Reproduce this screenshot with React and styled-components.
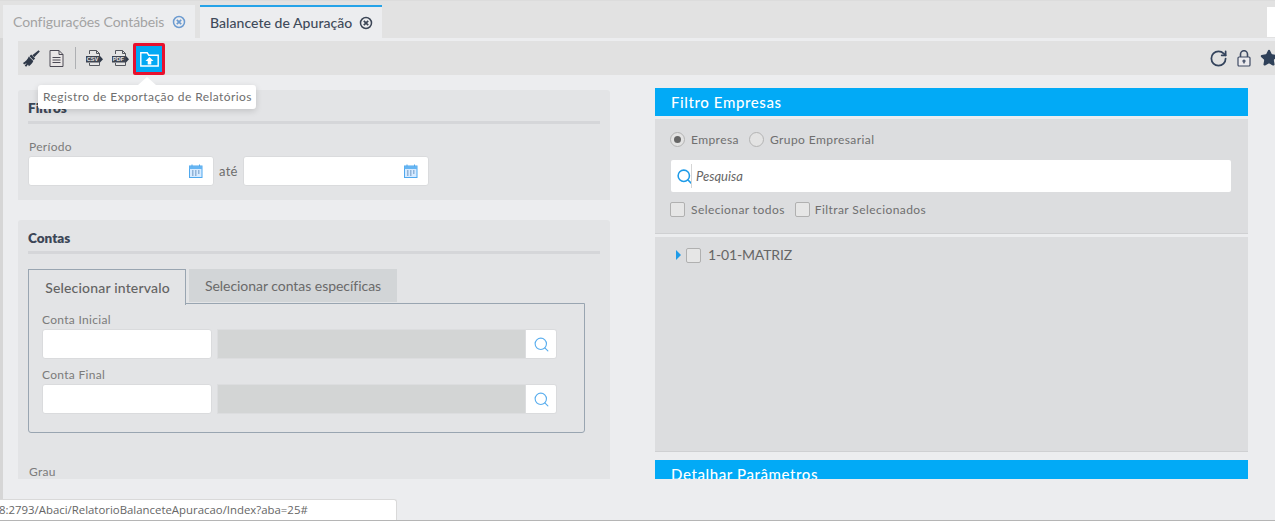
import React from "react";
import styled, { createGlobalStyle } from "styled-components";
import { RotateCw, Search, Star } from "lucide-react";

const Global = createGlobalStyle`
  html, body { margin: 0; padding: 0; background: #fff; }
  * { box-sizing: border-box; }
  body { font-family: Lato, "Open Sans", sans-serif; color: #666; }
`;

const Page = styled.div`
  position: relative;
  width: 1275px;
  height: 525px;
  overflow: hidden;
  background: #fff;
`;
const Screen = styled.div`
  height: 521px;
  background: #ecedef;
  border-bottom: 1px solid #b5b5b5;
`;
const TabBar = styled.div`
  height: 38px;
  background: #e2e2e2;
  border-top: 1px solid #dcdcdc;
  padding: 4px 0 0 3px;
  display: flex;
  align-items: stretch;
  gap: 5px;
  position: relative;
`;
const Tab = styled.div`
  display: flex;
  align-items: center;
  width: ${(p) => p.$w}px;
  padding-left: 10px;
  gap: ${(p) => (p.$active ? 7 : 8)}px;
  font-size: 14px;
  letter-spacing: ${(p) => (p.$active ? "0.05px" : "-0.08px")};
  white-space: nowrap;
  background: #ecedef;
  color: ${(p) => (p.$active ? "#3f4a5a" : "#a3a3a3")};
  border-top: ${(p) => (p.$active ? "2px solid #26a3e8" : "0")};
  font-weight: ${(p) => (p.$active ? 500 : 400)};
`;
const CornerBox = styled.div`
  position: absolute;
  right: 0;
  top: 6px;
  width: 8px;
  height: 30px;
  background: #fff;
`;
const Body = styled.div`
  padding: 3px 0 0 18px;
  background: linear-gradient(to right, #d6d6d6 3px, #ecedef 3px);
  height: 482px;
`;
const Toolbar = styled.div`
  height: 34px;
  background: #e1e1e1;
  display: flex;
  align-items: center;
  padding-left: 4px;
  position: relative;
`;
const ToolIcon = styled.span`
  display: flex;
  width: ${(p) => p.$w || 26}px;
  justify-content: center;
  align-items: center;
`;
const Divider = styled.span`
  width: 1px;
  height: 22px;
  background: #aeb0b3;
  margin: 0 5px 0 3px;
`;
const ActiveTool = styled.span`
  width: 32px;
  height: 32px;
  align-self: flex-end;
  border: 3px solid #e8112d;
  background: #02a9f4;
  display: flex;
  align-items: center;
  justify-content: center;
  border-radius: 2px;
`;
const RightTools = styled.div`
  margin-left: auto;
  display: flex;
  align-items: center;
  gap: 9px;
  width: 66px;
  overflow: hidden;
  & > svg { flex: none; }
`;
const Tooltip = styled.div`
  position: absolute;
  left: 20px;
  top: 44px;
  height: 24px;
  width: 218px;
  background: #fff;
  border-radius: 3px;
  font-size: 12px;
  letter-spacing: 0.43px;
  line-height: 24px;
  padding-left: 5px;
  color: #6e6e6e;
  box-shadow: 0 2px 6px rgba(0, 0, 0, 0.15);
  white-space: nowrap;
  &::before {
    content: "";
    position: absolute;
    left: 100px;
    top: -8px;
    border-left: 9px solid transparent;
    border-right: 9px solid transparent;
    border-bottom: 8px solid #fff;
  }
`;
const Columns = styled.div`
  display: flex;
  align-items: flex-start;
  height: 404px;
  overflow: hidden;
`;
const LeftCol = styled.div`
  width: 592px;
  margin-top: 15px;
  display: flex;
  flex-direction: column;
  gap: 20px;
`;
const Card = styled.section`
  background: #e3e4e6;
  border-radius: 3px 3px 0 0;
  padding: 10px 10px 0;
  height: ${(p) => p.$h}px;
`;
const CardTitle = styled.h3`
  margin: 0;
  height: 24px;
  font-size: 13.5px;
  line-height: 17px;
  font-weight: 800;
  color: #3c4656;
  border-bottom: 3px solid #d5d6d9;
`;
const FieldLabel = styled.label`
  display: block;
  font-size: 12px;
  letter-spacing: 0.3px;
  color: #7b7b7b;
  line-height: 14px;
  padding-left: ${(p) => p.$pl || 0}px;
  margin-top: ${(p) => p.$mt || 0}px;
`;
const DateRow = styled.div`
  display: flex;
  align-items: center;
  margin-top: 2px;
  gap: 5px;
  font-size: 13px;
  color: #6d6d6d;
  letter-spacing: 0.3px;
`;
const DateInput = styled.div`
  width: 186px;
  height: 30px;
  background: #fff;
  border: 1px solid #dadbdd;
  border-radius: 3px;
  display: flex;
  align-items: center;
  justify-content: flex-end;
  padding-right: 10px;
`;
const TabsRow = styled.div`
  display: flex;
  align-items: flex-start;
  gap: 3px;
  margin-top: 15px;
  position: relative;
  z-index: 1;
`;
const TabActive = styled.div`
  width: 158px;
  height: 36px;
  background: #e3e4e6;
  border: 1px solid #99a5b1;
  border-bottom: 0;
  padding-left: 1px;
  font-size: 14px;
  font-weight: 500;
  letter-spacing: 0.18px;
  color: #636363;
  text-align: center;
  line-height: 36px;
`;
const TabIdle = styled.div`
  width: 208px;
  height: 33px;
  background: #d2d5d7;
  font-size: 14px;
  letter-spacing: -0.04px;
  color: #6a6a6a;
  text-align: center;
  line-height: 34px;
`;
const TabPanel = styled.div`
  margin-top: -2px;
  width: 557px;
  height: 130px;
  border: 1px solid #99a5b1;
  border-radius: 0 0 3px 3px;
  padding: 9px 13px 0;
`;
const AccountRow = styled.div`
  display: flex;
  margin-top: 2px;
`;
const TextInput = styled.div`
  width: 170px;
  height: 30px;
  background: #fff;
  border: 1px solid #dadbdd;
  border-radius: 3px;
`;
const ReadOnly = styled.div`
  width: 309px;
  height: 30px;
  margin-left: 5px;
  background: #d3d5d5;
  border: 1px solid #dcdddf;
`;
const LookupBtn = styled.div`
  width: 31px;
  height: 30px;
  background: #fff;
  border: 1px solid #dadbdd;
  border-left: 0;
  border-radius: 0 3px 3px 0;
  display: flex;
  align-items: center;
  justify-content: center;
`;
const RightCol = styled.div`
  width: 593px;
  margin-left: 45px;
  margin-top: 13px;
`;
const PanelHead = styled.div`
  height: 28px;
  background: #02aaf6;
  color: #fff;
  font-size: 15px;
  font-weight: 500;
  letter-spacing: 0.6px;
  line-height: 29px;
  padding-left: 16px;
`;
const FilterBox = styled.div`
  margin-top: 3px;
  height: 115px;
  background: #dcdddf;
  border-bottom: 1px solid #cfd0d2;
  padding: 12px 15px 0;
`;
const OptionRow = styled.div`
  display: flex;
  align-items: center;
  font-size: 12px;
  letter-spacing: 0.42px;
  color: #6f6f6f;
  height: 16px;
`;
const Radio = styled.span`
  width: 15px;
  height: 15px;
  border-radius: 50%;
  border: 1px solid #b3b3b3;
  background: #e3e3e3;
  display: inline-flex;
  align-items: center;
  justify-content: center;
  margin-right: 6px;
  &::after {
    content: "";
    width: 7px;
    height: 7px;
    border-radius: 50%;
    background: ${(p) => (p.$on ? "#666" : "transparent")};
  }
`;
const OptionText = styled.span`
  margin-right: ${(p) => p.$mr || 0}px;
  margin-left: ${(p) => p.$ml || 0}px;
  margin-bottom: ${(p) => p.$mb || 0}px;
`;
const SearchBox = styled.div`
  margin: 13px 0 9px 1px;
  height: 32px;
  width: 560px;
  background: #fff;
  border-radius: 2px;
  display: flex;
  align-items: center;
  padding-left: 6px;
`;
const SearchGlass = styled(Search)`
  flex: none;
  margin: 0 -2px 0 -1px;
`;
const SearchSep = styled.span`
  width: 1px;
  height: 24px;
  background: #d5d5d5;
  margin-right: 4px;
`;
const SearchHint = styled.span`
  font-style: italic;
  font-size: 13px;
  color: #666;
`;
const Check = styled.span`
  width: 15px;
  height: 15px;
  border-radius: 2px;
  border: 1px solid #b0b0b0;
  background: #e6e6e6;
  display: inline-block;
  margin-right: ${(p) => p.$mr || 6}px;
`;
const TreeBox = styled.div`
  margin-top: 3px;
  height: 215px;
  background: #dcdddf;
  border-bottom: 1px solid #cfd0d2;
  padding: 10px 0 0 21px;
  display: flex;
  align-items: flex-start;
`;
const TreeRow = styled.div`
  display: flex;
  align-items: center;
  height: 16px;
  font-size: 14px;
  letter-spacing: -0.15px;
  color: #666;
`;
const Caret = styled.span`
  width: 0;
  height: 0;
  border-left: 5px solid #1e9be8;
  border-top: 5px solid transparent;
  border-bottom: 5px solid transparent;
  margin-right: 5px;
`;
const SecondHead = styled(PanelHead)`
  margin-top: 8px;
`;
const StatusUrl = styled.div`
  position: absolute;
  left: 0;
  top: 499px;
  width: 397px;
  height: 21px;
  background: #fff;
  border: 1px solid #d9d9d9;
  border-left: 0;
  border-bottom: 0;
  border-radius: 0 3px 0 0;
  line-height: 20px;
  color: #666;
  white-space: nowrap;
  overflow: hidden;
`;
const UrlText = styled.span`
  display: block;
  font-family: "Open Sans", sans-serif;
  font-size: 11.4px;
  margin-left: -1px;
`;

const Close = ({ color }) => (
  <svg width="14" height="14" viewBox="0 0 14 14" fill="none">
    <circle cx="7" cy="7" r="5.5" stroke={color} strokeWidth="1.5" />
    <path d="M4.8 4.8l4.4 4.4M9.2 4.8l-4.4 4.4" stroke={color} strokeWidth="1.7" />
  </svg>
);
const Cal = () => (
  <svg width="14" height="14" viewBox="0 0 14 14">
    <rect x="0.5" y="2" width="12.5" height="11.5" fill="#d6eaff" stroke="#4fa8ee" />
    <rect x="0.5" y="2" width="12.5" height="3" fill="#66b5f2" />
    <path d="M3 0.5v2M10.5 0.5v2" stroke="#4fa8ee" />
    <path d="M3 7h1.5M6 7h1.5M9 7h1.5M3 9h1.5M6 9h1.5M9 9h1.5M3 11h1.5M6 11h1.5" stroke="#4f7eb0" />
  </svg>
);
const FileExport = ({ label }) => (
  <svg width="17" height="16" viewBox="0 0 17 16" fill="none">
    <path d="M3.5 4V.5h7l3 3V15.5h-10V13" stroke="#55585f" fill="#e6e6e6" />
    <path d="M10.5 .5v3h3" stroke="#55585f" />
    <rect x="0" y="6" width="14" height="6.5" fill="#3f4551" />
    <path d="M14 6l3 3.2-3 3.2z" fill="#2f3949" />
    <text x="0.8" y="11.3" fontSize="5.6" fontWeight="700" fill="#e8e8e8" fontFamily="Liberation Sans">{label}</text>
  </svg>
);
const DocIcon = () => (
  <svg width="15" height="17" viewBox="0 0 15 17" fill="none" stroke="#4c4a55">
    <path d="M1 .5h9l4 4v12H1z" fill="#e9e6e6" />
    <path d="M10 .5v4h4M3.5 7.5h8M3.5 10h8M3.5 12.5h8" />
  </svg>
);
const BroomIcon = () => (
  <svg width="17" height="17" viewBox="0 0 17 17" fill="#2f3949">
    <path d="M16.8 1.4L15.6.2 9.3 5.2l2 2.1z" />
    <path d="M8.2 4.6l3.9 4-1.6 1.6-4-4z" />
    <path d="M5.8 6.6l4.5 4.4c-.8 2-2.3 3.8-4.4 5.2L5 14.4l-1.8 2.3-1.5-1L3.7 13l-2.6 1.6L0 13c2.6-1.4 4.7-3.3 5.8-6.4z" />
  </svg>
);
const FolderUp = () => (
  <svg width="19" height="15" viewBox="0 0 19 15" fill="none">
    <path d="M.8 14V.8h6.4l1.6 2.4h9.4V14z" stroke="#fff" strokeWidth="1.4" />
    <path d="M9.5 5l4 4h-2.2v3.5H7.7V9H5.5z" fill="#fff" />
  </svg>
);
const LockIcon = () => (
  <svg width="14" height="17" viewBox="0 0 14 17" fill="none" stroke="#3e4a63" strokeWidth="1.2">
    <path d="M3.5 7V4.2a3.5 3.5 0 0 1 7 0V7" strokeWidth="1.6" />
    <rect x="1" y="7" width="12" height="9" rx="1" fill="#ecebee" />
    <circle cx="7" cy="11" r="1" />
    <path d="M7 12v1.5" />
  </svg>
);

export default function App() {
  return (
    <Page>
      <Global />
      <Screen>
        <TabBar>
          <Tab $w={192}>
            Configurações Contábeis
            <Close color="#6c9bd0" />
          </Tab>
          <Tab $w={182} $active>
            Balancete de Apuração
            <Close color="#3c4656" />
          </Tab>
          <CornerBox />
        </TabBar>
        <Body>
          <Toolbar>
            <ToolIcon $w={18}><BroomIcon /></ToolIcon>
            <ToolIcon $w={32}><DocIcon /></ToolIcon>
            <Divider />
            <ToolIcon><FileExport label="CSV" /></ToolIcon>
            <ToolIcon><FileExport label="PDF" /></ToolIcon>
            <ActiveTool><FolderUp /></ActiveTool>
            <RightTools>
              <RotateCw size={19} color="#33435c" strokeWidth={2.2} />
              <LockIcon />
              <Star size={18} color="#2f4159" fill="#2f4159" />
            </RightTools>
            <Tooltip>Registro de Exportação de Relatórios</Tooltip>
          </Toolbar>
          <Columns>
            <LeftCol>
              <Card $h={110}>
                <CardTitle>Filtros</CardTitle>
                <FieldLabel $mt={16} $pl={1}>Período</FieldLabel>
                <DateRow>
                  <DateInput><Cal /></DateInput>
                  até
                  <DateInput><Cal /></DateInput>
                </DateRow>
              </Card>
              <Card $h={270}>
                <CardTitle>Contas</CardTitle>
                <TabsRow>
                  <TabActive>Selecionar intervalo</TabActive>
                  <TabIdle>Selecionar contas específicas</TabIdle>
                </TabsRow>
                <TabPanel>
                  <FieldLabel>Conta Inicial</FieldLabel>
                  <AccountRow>
                    <TextInput />
                    <ReadOnly />
                    <LookupBtn><Search size={17} color="#5aaeee" strokeWidth={1.6} /></LookupBtn>
                  </AccountRow>
                  <FieldLabel $mt={9}>Conta Final</FieldLabel>
                  <AccountRow>
                    <TextInput />
                    <ReadOnly />
                    <LookupBtn><Search size={17} color="#5aaeee" strokeWidth={1.6} /></LookupBtn>
                  </AccountRow>
                </TabPanel>
                <FieldLabel $mt={32} $pl={1}>Grau</FieldLabel>
              </Card>
            </LeftCol>
            <RightCol>
              <PanelHead>Filtro Empresas</PanelHead>
              <FilterBox>
                <OptionRow>
                  <Radio $on />
                  <OptionText $mr={10}>Empresa</OptionText>
                  <Radio />
                  <OptionText>Grupo Empresarial</OptionText>
                </OptionRow>
                <SearchBox>
                  <SearchGlass size={17} color="#1e9be8" strokeWidth={2.2} />
                  <SearchSep />
                  <SearchHint>Pesquisa</SearchHint>
                </SearchBox>
                <OptionRow>
                  <Check />
                  <OptionText $mr={10}>Selecionar todos</OptionText>
                  <Check $mr={5} />
                  <OptionText>Filtrar Selecionados</OptionText>
                </OptionRow>
              </FilterBox>
              <TreeBox>
                <TreeRow>
                  <Caret />
                  <Check />
                  <OptionText $ml={1} $mb={2}>1-01-MATRIZ</OptionText>
                </TreeRow>
              </TreeBox>
              <SecondHead>Detalhar Parâmetros</SecondHead>
            </RightCol>
          </Columns>
        </Body>
      </Screen>
      <StatusUrl><UrlText>8:2793/Abaci/RelatorioBalanceteApuracao/Index?aba=25#</UrlText></StatusUrl>
    </Page>
  );
}
